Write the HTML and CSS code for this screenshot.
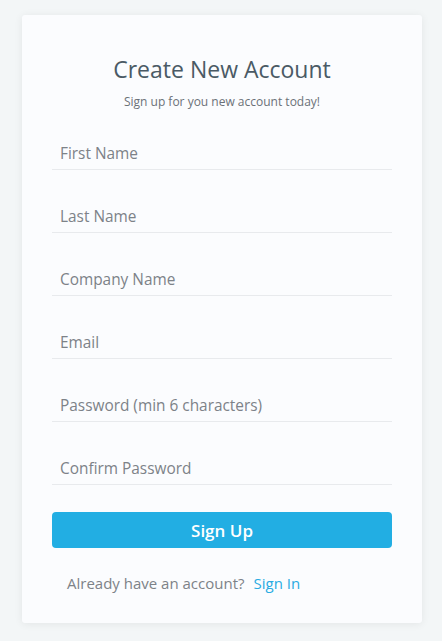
FILE: index.html
```html
<!DOCTYPE html>
<html lang="en">
<head>
<meta charset="utf-8">
<title>Create New Account</title>
<link rel="stylesheet" href="styles.css">
</head>
<body>
<main class="card">
  <h1 class="title">Create New Account</h1>
  <p class="subtitle">Sign up for you new account today!</p>
  <form class="form">
    <input class="field" type="text" placeholder="First Name">
    <input class="field" type="text" placeholder="Last Name">
    <input class="field" type="text" placeholder="Company Name">
    <input class="field" type="email" placeholder="Email">
    <input class="field" type="password" placeholder="Password (min 6 characters)">
    <input class="field" type="password" placeholder="Confirm Password">
    <button class="btn" type="button">Sign Up</button>
  </form>
  <p class="footer">Already have an account?<a class="link" href="#">Sign In</a></p>
</main>
</body>
</html>
```
FILE: styles.css
```css
html, body {
  margin: 0;
  padding: 0;
}
body {
  background: #f3f6f7;
  font-family: "Open Sans", "Liberation Sans", sans-serif;
  padding: 15px 20px 18px 22px;
}
.card {
  width: 400px;
  box-sizing: border-box;
  background: #fbfcfe;
  border-radius: 3px;
  box-shadow: 0 1px 8px rgba(0, 0, 0, 0.07);
  padding: 40px 30px 30px;
}
.title {
  margin: 0;
  text-align: center;
  font-weight: 400;
  font-size: 23px;
  line-height: 28px;
  color: #4a5a65;
}
.subtitle {
  margin: 12px 0 0;
  text-align: center;
  font-size: 12px;
  line-height: 14px;
  color: #6b7178;
}
.form {
  display: flex;
  flex-direction: column;
  gap: 25px;
  margin-top: 23px;
}
.field {
  display: block;
  width: 100%;
  box-sizing: border-box;
  height: 38px;
  border: none;
  border-bottom: 1px solid #e8eaed;
  background: transparent;
  padding: 6px 8px 0;
  font-family: inherit;
  font-size: 15.4px;
  color: #555;
  outline: none;
}
.field::placeholder {
  color: #7d8288;
  opacity: 1;
}
.btn {
  margin-top: 2px;
  height: 36px;
  border: none;
  border-radius: 4px;
  background: #22aee3;
  color: #fff;
  font-family: inherit;
  font-size: 17px;
  font-weight: 600;
}
.footer {
  margin: 25px 0 0;
  padding-left: 15px;
  font-size: 15px;
  line-height: 20px;
  color: #7d8288;
}
.link {
  margin-left: 9px;
  color: #29abe2;
  text-decoration: none;
}
```
